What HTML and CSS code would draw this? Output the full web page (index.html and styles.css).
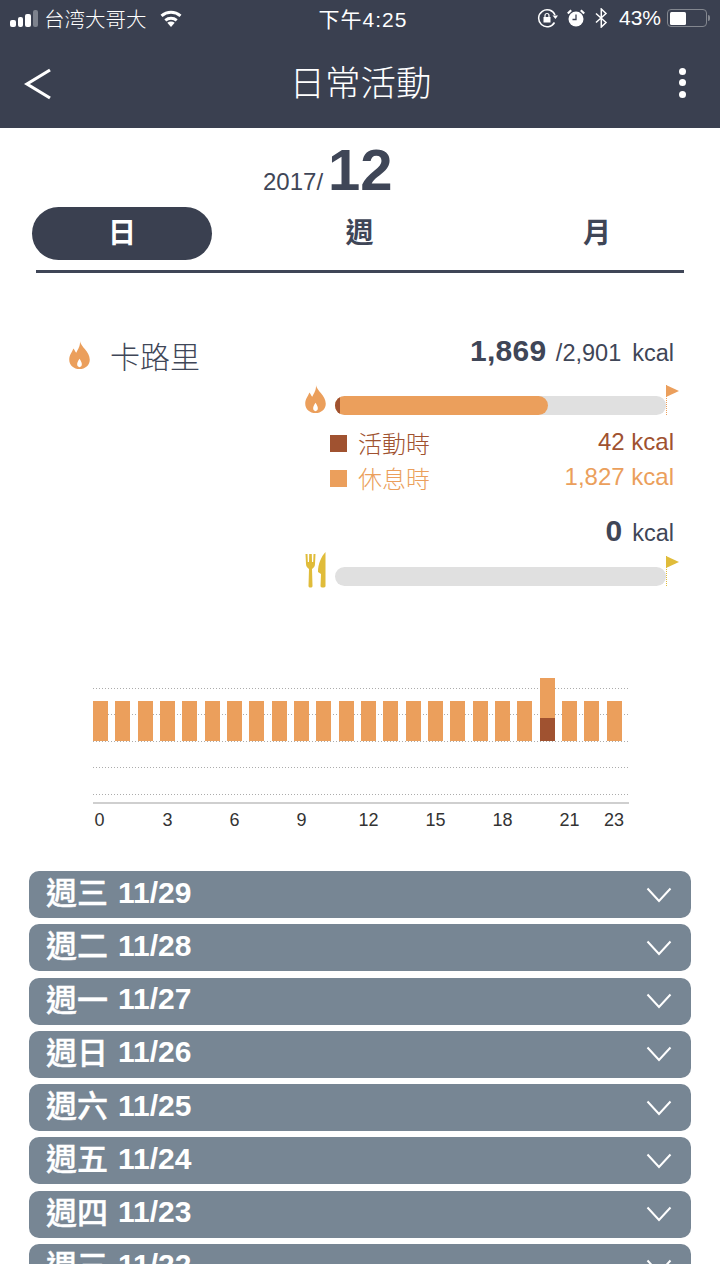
FILE: index.html
```html
<!DOCTYPE html>
<html lang="zh-Hant">
<head>
<meta charset="utf-8">
<title>日常活動</title>
<link rel="stylesheet" href="styles.css">
</head>
<body>
<svg class="defs" width="0" height="0" aria-hidden="true">
  <symbol id="flame" viewBox="0 0 24 30">
    <path fill-rule="evenodd" d="M12.500 0C13 6 23 11 23 20C23 26 18 30 12 30C6 30 1 26 1 20C1 15 4 12 5.500 8C7 10 7.500 11.500 8.500 12.500C10.500 9 13 5 12.500 0ZM12 19C10.500 21.500 9.500 23 9.500 25C9.500 26.800 10.500 28 12 28C13.500 28 14.500 26.800 14.500 25C14.500 23 13.500 21.500 12 19Z"/>
  </symbol>
  <symbol id="chev" viewBox="0 0 26 16">
    <path d="M1.500 1.500L13 14L24.500 1.500" fill="none" stroke="#fff" stroke-width="2"/>
  </symbol>
</svg>
<div class="page">
  <header class="top">
    <div class="status">
      <div class="status-left">
        <div class="signal"><i class="s1"></i><i class="s2"></i><i class="s3"></i><i class="s4"></i></div>
        <span class="carrier">台湾大哥大</span>
        <svg class="wifi" viewBox="0 0 24 17"><path d="M12 17L8.300 12.700C10.400 11 13.600 11 15.700 12.700Z" fill="#fff"/><path d="M6.300 10.300C9.600 7.600 14.400 7.600 17.700 10.300M2.500 5.800C8 1.200 16 1.200 21.500 5.800" fill="none" stroke="#fff" stroke-width="3"/></svg>
      </div>
      <div class="clock">下午4:25</div>
      <div class="status-right">
        <svg class="rot" viewBox="0 0 22 20"><path d="M17.500 14.500A8.500 8.500 0 1 1 18 7" fill="none" stroke="#fff" stroke-width="1.500"/><path d="M15.500 7.500H21L18.500 11Z" fill="#fff"/><rect x="6.500" y="9" width="7" height="5.500" fill="#fff"/><path d="M8 9V7.500A2 2 0 0 1 12 7.500V9" fill="none" stroke="#fff" stroke-width="1.200"/></svg>
        <svg class="alarm" viewBox="0 0 18 18"><circle cx="9" cy="10" r="7.500" fill="#fff"/><path d="M9 5.500V10.500H5.500" fill="none" stroke="#3a4050" stroke-width="1.300"/><path d="M0.800 4.500L4.200 1.200M17.200 4.500L13.800 1.200" stroke="#fff" stroke-width="2.200"/></svg>
        <svg class="bt" viewBox="0 0 13 20"><path d="M1 5.500L11 14.500L6.300 19V1L11 5.500L1 14.500" fill="none" stroke="#fff" stroke-width="1.500"/></svg>
        <span class="pct">43%</span>
        <div class="battery"><div class="battery-fill"></div></div>
        <div class="nub"></div>
      </div>
    </div>
    <div class="nav">
      <svg class="back" viewBox="0 0 28 32"><path d="M26 2L3 16L26 30" fill="none" stroke="#fff" stroke-width="3.200"/></svg>
      <h1 class="title">日常活動</h1>
      <div class="more"><i></i><i></i><i></i></div>
    </div>
  </header>

  <div class="date"><span class="year">2017/</span><span class="month">12</span></div>

  <nav class="tabs">
    <div class="tab tab-active"><span>日</span></div>
    <div class="tab"><span>週</span></div>
    <div class="tab"><span>月</span></div>
  </nav>
  <div class="rule"></div>

  <section class="cal">
    <div class="cal-head">
      <div class="cal-name">
        <svg class="flame-lg"><use href="#flame"/></svg>
        <span>卡路里</span>
      </div>
      <div class="total total-main"><b>1,869</b> <span class="goal">/2,901</span><span class="unit">kcal</span></div>
    </div>

    <div class="meter">
      <svg class="flame-sm"><use href="#flame"/></svg>
      <div class="track">
        <div class="fill"><div class="fill-dark"></div></div>
        <div class="flag flag-orange"></div>
      </div>
    </div>

    <div class="legend legend-dark">
      <span class="sw"></span><span class="lname">活動時</span><span class="lval">42 kcal</span>
    </div>
    <div class="legend legend-light">
      <span class="sw"></span><span class="lname">休息時</span><span class="lval">1,827 kcal</span>
    </div>

    <div class="total total-food"><b>0</b><span class="unit">kcal</span></div>
    <div class="meter meter-food">
      <svg class="cutlery" viewBox="0 0 22 36">
        <path d="M0.500 2L1 12C1 15 3 16 4 17L3.500 34C3.500 36 7.500 36 7.500 34L7 17C8 16 10 15 10 12L10.500 2H8.500L8.200 10H7L6.800 2H4.200L4 10H2.800L2.500 2Z" fill="#e0bc3a"/>
        <path d="M20.500 0C16 5 13 12 13 20L16 22L15.500 34C15.500 36 20.500 36 20.500 34Z" fill="#e0bc3a"/>
      </svg>
      <div class="track">
        <div class="flag flag-yellow"></div>
      </div>
    </div>
  </section>

  <section class="chart">
    <div class="plot">
      <div class="grids"><i></i><i></i><i></i><i></i><i></i></div>
      <div class="bars">
        <div class="bar"></div><div class="bar"></div><div class="bar"></div><div class="bar"></div>
        <div class="bar"></div><div class="bar"></div><div class="bar"></div><div class="bar"></div>
        <div class="bar"></div><div class="bar"></div><div class="bar"></div><div class="bar"></div>
        <div class="bar"></div><div class="bar"></div><div class="bar"></div><div class="bar"></div>
        <div class="bar"></div><div class="bar"></div><div class="bar"></div><div class="bar"></div>
        <div class="bar bar-tall"><div class="bar-active"></div></div>
        <div class="bar"></div><div class="bar"></div><div class="bar"></div>
      </div>
    </div>
    <div class="axis">
      <span>0</span><span></span><span></span><span>3</span><span></span><span></span><span>6</span><span></span><span></span><span>9</span><span></span><span></span><span>12</span><span></span><span></span><span>15</span><span></span><span></span><span>18</span><span></span><span></span><span>21</span><span></span><span>23</span>
    </div>
  </section>

  <section class="days">
    <div class="day"><span class="day-label"><span class="wk">週三</span><span>11/29</span></span><svg class="chev"><use href="#chev"/></svg></div>
    <div class="day"><span class="day-label"><span class="wk">週二</span><span>11/28</span></span><svg class="chev"><use href="#chev"/></svg></div>
    <div class="day"><span class="day-label"><span class="wk">週一</span><span>11/27</span></span><svg class="chev"><use href="#chev"/></svg></div>
    <div class="day"><span class="day-label"><span class="wk">週日</span><span>11/26</span></span><svg class="chev"><use href="#chev"/></svg></div>
    <div class="day"><span class="day-label"><span class="wk">週六</span><span>11/25</span></span><svg class="chev"><use href="#chev"/></svg></div>
    <div class="day"><span class="day-label"><span class="wk">週五</span><span>11/24</span></span><svg class="chev"><use href="#chev"/></svg></div>
    <div class="day"><span class="day-label"><span class="wk">週四</span><span>11/23</span></span><svg class="chev"><use href="#chev"/></svg></div>
    <div class="day"><span class="day-label"><span class="wk">週三</span><span>11/22</span></span><svg class="chev"><use href="#chev"/></svg></div>
  </section>
</div>
</body>
</html>
```
FILE: styles.css
```css
* { box-sizing: border-box; }
html, body { margin: 0; padding: 0; background: #fff; }
body {
  font-family: "Liberation Sans", "Noto Sans CJK TC", sans-serif;
  color: #3f4657;
}
.defs { display: block; height: 0; }
.page { width: 720px; height: 1280px; overflow: hidden; background: #fff; }

/* Header */
.top { height: 128px; background: #3a4050; color: #fff; }
.status {
  height: 36px;
  display: grid;
  grid-template-columns: 1fr auto 1fr;
  align-items: center;
  padding: 0 10px;
}
.status-left { display: flex; align-items: center; }
.signal { display: flex; align-items: flex-end; gap: 2px; height: 17px; width: 29px; }
.signal i { display: block; width: 5.500px; border-radius: 2px; background: #fff; }
.signal .s1 { height: 7px; }
.signal .s2 { height: 10px; }
.signal .s3 { height: 13px; }
.signal .s4 { height: 17px; background: #7d828d; }
.carrier { margin-left: 5px; font-size: 20.500px; font-weight: 300; }
.wifi { margin-left: 12px; width: 24px; height: 17px; }
.clock { font-size: 21px; letter-spacing: 1px; margin-left: 6px; }
.status-right { display: flex; align-items: center; justify-content: flex-end; }
.rot { width: 22px; height: 20px; margin-right: 1px; }
.alarm { width: 18px; height: 18px; margin-left: 7px; margin-right: 4px; }
.bt { width: 13px; height: 20px; margin-left: 6px; }
.pct { margin-left: 11px; font-size: 21px; }
.battery { margin-left: 6px; width: 40px; height: 18px; border: 1.500px solid #83878f; border-radius: 4px; padding: 1.500px; }
.battery-fill { width: 16px; height: 100%; background: #fff; border-radius: 1.500px; }
.nub { width: 2px; height: 6px; margin-left: 1px; background: #83878f; border-radius: 0 2px 2px 0; }

.nav { height: 92px; display: grid; grid-template-columns: 1fr auto 1fr; align-items: center; padding: 4px 24px 0 24px; }
.back { width: 28px; height: 32px; }
.title {
  margin: 0 0 0 1px;
  font-size: 35.500px;
  font-weight: 300;
  line-height: 40px;
  letter-spacing: 0;
}
.more { display: flex; flex-direction: column; gap: 4.500px; width: 7px; justify-self: end; margin: -3px 10px 0 0; }
.more i { display: block; width: 7px; height: 7px; border-radius: 50%; background: #fff; }

/* Date + tabs */
.date { height: 79px; padding: 11px 0 0 263px; display: flex; align-items: baseline; }
.year { font-size: 24px; }
.month { font-size: 58px; font-weight: 700; margin-left: 5px; line-height: 62px; }

.tabs { display: flex; justify-content: space-between; padding: 0 33px 0 32px; }
.tab {
  width: 180px;
  height: 53px;
  border-radius: 27px;
  display: flex;
  align-items: center;
  justify-content: center;
  padding-bottom: 5px;
  font-size: 28px;
  font-weight: 700;
  color: #3f4657;
}
.tab-active { background: #3a4050; color: #fff; }
.rule { height: 3px; margin: 10px 36px 0; background: #3f4657; }

/* Calories */
.cal { padding: 0 46px 0 0; }
.cal-head { display: flex; justify-content: space-between; align-items: center; height: 44px; margin-top: 58px; }
.cal-name { display: flex; align-items: center; padding-left: 68px; padding-top: 4px; font-size: 30px; font-weight: 300; }
.cal-name span { margin-left: 19px; }
.flame-lg { width: 23px; height: 28px; fill: #eb9f5c; margin-top: -1px; }
.total { font-size: 23.500px; text-align: right; }
.total-main { padding-bottom: 4px; }
.total b { font-size: 30px; }
.total-main b { letter-spacing: 0.250px; }
.goal { margin-left: 3px; }
.unit { margin-left: 11px; }

.meter { display: flex; align-items: flex-end; padding-left: 304px; margin-top: 5px; height: 35px; }
.flame-sm { width: 23px; height: 28px; fill: #eb9f5c; margin-bottom: 2px; }
.track { position: relative; margin-left: 8px; width: 331px; height: 19px; background: #e0e0e0; border-radius: 10px; }
.fill { width: 213px; height: 19px; background: #eb9f5c; border-radius: 10px; overflow: hidden; }
.fill-dark { width: 5px; height: 19px; background: #a05230; }
.flag { position: absolute; left: 331px; bottom: 0; width: 12px; height: 30px; border-left: 1px dotted; }
.flag::before { content: ""; position: absolute; left: -1px; top: 0; border-left: 13px solid; border-top: 6px solid transparent; border-bottom: 6px solid transparent; border-left-color: inherit; }
.flag-orange { border-left-color: #eb9f5c; }
.flag-yellow { border-left-color: #e0bc3a; }

.legend { display: flex; align-items: center; padding-left: 330px; font-size: 24px; height: 35px; }
.legend-dark { color: #a05230; margin-top: 11px; }
.legend-light { color: #eb9f5c; }
.sw { width: 17px; height: 17px; background: currentColor; margin-bottom: 1px; }
.lname { margin-left: 11px; margin-bottom: 2px; font-weight: 300; }
.lval { margin-left: auto; margin-bottom: 3px; }

.total-food { margin-top: 16px; height: 38px; line-height: 38px; }
.total-food .unit { margin-left: 10px; }
.meter-food { margin-top: 0; height: 36px; padding-left: 305px; }
.cutlery { width: 22px; height: 36px; margin-bottom: -2px; }
.meter-food .track { margin-left: 8px; }

/* Chart */
.chart { margin: 92px 0 0 93px; width: 536px; }
.plot { position: relative; height: 126px; border-bottom: 2px solid #cfcfcf; }
.grids { position: absolute; left: 0; right: 0; top: 10px; bottom: 0; }
.grids i {
  position: absolute;
  left: 0;
  right: 0;
  height: 1px;
  background: repeating-linear-gradient(90deg, #acacac 0 1px, transparent 1px 3px);
}
.grids i:nth-child(1) { top: 0; }
.grids i:nth-child(2) { top: 26px; }
.grids i:nth-child(3) { top: 53px; }
.grids i:nth-child(4) { top: 79px; }
.grids i:nth-child(5) { top: 106px; }
.bars { position: relative; display: grid; grid-template-columns: repeat(24, 22.330px); height: 63px; align-items: end; }
.bar { width: 15px; height: 40px; background: #eb9f5c; }
.bar-tall { height: 63px; display: flex; align-items: flex-end; }
.bar-active { width: 15px; height: 23px; background: #a05230; }

.axis { display: grid; grid-template-columns: repeat(24, 22.330px); margin-top: 6px; font-size: 18px; line-height: 20px; color: #333; }
.axis span { display: flex; justify-content: center; width: 15px; white-space: nowrap; }
.axis span:first-child { margin-left: -1px; }

/* Day list */
.days { margin: 41px 29px 0; height: 393px; overflow: hidden; display: flex; flex-direction: column; gap: 6.250px; }
.day {
  flex: none;
  height: 47px;
  padding: 0 19px 0 17px;
  display: flex;
  align-items: center;
  justify-content: space-between;
  background: #778694;
  border-radius: 10px;
  color: #fff;
  font-size: 30px;
  font-weight: 700;
}
.day-label { display: flex; align-items: center; gap: 10px; margin-top: -4px; }
.wk { font-size: 31px; font-weight: 500; margin-top: -4px; -webkit-text-stroke: 0.400px #fff; }
.chev { width: 26px; height: 16px; }
```
